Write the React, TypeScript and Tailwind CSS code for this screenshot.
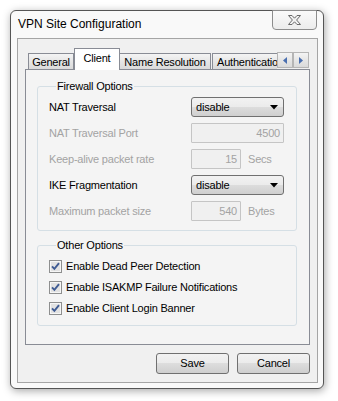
import React from "react";

const font = "font-['Liberation_Sans',Arial,sans-serif]";
const btnBg =
  "bg-[linear-gradient(#f2f2f2_0%,#ebebeb_50%,#dddddd_50%,#cfcfcf_100%)]";
const tabBg = "bg-[linear-gradient(#f4f4f4_0%,#e6e6e6_50%,#dadada_100%)]";

const Dropdown = ({ value }: { value: string }) => (
  <div
    className={`w-[93px] h-[20px] rounded-[3px] border border-[#707070] ${btnBg} flex items-center justify-between pl-[4px] pr-[5px]`}
  >
    <span className="text-black">{value}</span>
    <svg width="8" height="5" viewBox="0 0 8 5">
      <path d="M0 0H8L4 4.5Z" fill="#000" />
    </svg>
  </div>
);

const Field = ({ value, width }: { value: string; width: string }) => (
  <div
    className={`${width} h-[20px] border border-[#c5c5c5] rounded-[1px] bg-[#f0f0f0] text-right pr-[3px] leading-[18px] text-[#a3a3a3]`}
  >
    {value}
  </div>
);

const Check = () => (
  <svg width="13" height="13" viewBox="0 0 13 13">
    <rect x="0.5" y="0.5" width="12" height="12" fill="#f6f6f6" stroke="#8e8f8f" />
    <rect x="2" y="2" width="9" height="9" fill="#e2e2e2" />
    <path
      d="M3 6.3L5.4 8.9L10 3.2"
      fill="none"
      stroke="#3f5b93"
      strokeWidth="1.9"
    />
  </svg>
);

const ScrollArrow = ({ dir }: { dir: "left" | "right" }) => (
  <div
    className={`w-[16px] h-[16px] mb-px border border-[#b5b5b5] ${tabBg} flex items-center justify-center`}
  >
    <svg width="4" height="7" viewBox="0 0 4 7">
      {dir === "left" ? (
        <path d="M4 0V7L0 3.5Z" fill="#4a6fb0" />
      ) : (
        <path d="M0 0V7L4 3.5Z" fill="#4a6fb0" />
      )}
    </svg>
  </div>
);

const firewallRows = [
  { label: "NAT Traversal", enabled: true, kind: "select", value: "disable" },
  { label: "NAT Traversal Port", enabled: false, kind: "field", value: "4500" },
  { label: "Keep-alive packet rate", enabled: false, kind: "small", value: "15", unit: "Secs" },
  { label: "IKE Fragmentation", enabled: true, kind: "select", value: "disable" },
  { label: "Maximum packet size", enabled: false, kind: "small", value: "540", unit: "Bytes" },
];

const options = [
  "Enable Dead Peer Detection",
  "Enable ISAKMP Failure Notifications",
  "Enable Client Login Banner",
];

export default function App() {
  return (
    <div className={`w-[338px] h-[401px] bg-white pt-[10px] pl-[10px] text-[11px] leading-[13px] tracking-[-0.2px] ${font}`}>
      <div className="w-[314px] h-[379px] rounded-[6px] border border-[#555] bg-[#f9f9f9] shadow-[1px_2px_8px_rgba(0,0,0,0.35)] flex flex-col pl-[6px] pr-[5px] pb-[5px]">
        {/* title bar */}
        <div className="h-[27px] flex items-start justify-between">
          <div className="pl-[1px] pt-[6px] text-[12px] leading-[14px] tracking-normal text-black">
            VPN Site Configuration
          </div>
          <div className="-mt-px mr-px w-[45px] h-[20px] rounded-b-[4px] border border-[#8d8d8d] bg-[linear-gradient(#fafafa,#ececec)] flex items-center justify-center">
            <svg width="13" height="10" viewBox="0 0 13 10">
              <path
                d="M0.5 0.5H4L6.5 3.2L9 0.5H12.5L8.6 5L12.5 9.5H9L6.5 6.8L4 9.5H0.5L4.4 5Z"
                fill="#f2f2f2"
                stroke="#6a6a6a"
              />
            </svg>
          </div>
        </div>

        {/* client area */}
        <div className="h-[345px] border border-[#a5a5a5] bg-[#f0f0f0] pt-[9px] px-[7px] flex flex-col">
          {/* tabs */}
          <div className="h-[21px] flex items-end">
            <div className={`ml-[3px] w-[46px] h-[16px] border-x border-t border-[#898c95] ${tabBg} flex items-center justify-center pt-[1px]`}>
              General
            </div>
            <div className="relative z-10 -mb-px w-[46px] h-[22px] border-x border-t border-[#898c95] bg-white flex justify-center pt-[3px]">
              Client
            </div>
            <div className={`w-[91px] h-[16px] border-r border-t border-[#898c95] ${tabBg} flex items-center justify-center pt-[1px]`}>
              Name Resolution
            </div>
            <div className={`ml-px w-[65px] h-[16px] border-l border-t border-[#898c95] ${tabBg} overflow-hidden whitespace-nowrap pl-[4px] pt-[2px]`}>
              Authentication
            </div>
            <ScrollArrow dir="left" />
            <ScrollArrow dir="right" />
          </div>

          {/* tab page */}
          <div className="h-[276px] border border-[#898c95] bg-[#f4f4f4] pt-[10px] pl-[11px] pr-[12px] flex flex-col">
            <fieldset className="w-[260px] border border-[#d5dfe5] rounded-[3px] pl-[11px] pt-[4px] pb-[9px]">
              <legend className="ml-[7px] px-[1px] text-black">Firewall Options</legend>
              <div className="flex flex-col gap-[6px]">
                {firewallRows.map((r) => (
                  <div key={r.label} className="h-[20px] flex items-center">
                    <div className={`w-[142px] ${r.enabled ? "text-black" : "text-[#a3a3a3]"}`}>
                      {r.label}
                    </div>
                    {r.kind === "select" && <Dropdown value={r.value} />}
                    {r.kind === "field" && <Field value={r.value} width="w-[93px]" />}
                    {r.kind === "small" && (
                      <div className="flex items-center gap-[7px]">
                        <Field value={r.value} width="w-[50px]" />
                        <span className="text-[#a3a3a3]">{r.unit}</span>
                      </div>
                    )}
                  </div>
                ))}
              </div>
            </fieldset>

            <fieldset className="mt-[8px] w-[260px] border border-[#d5dfe5] rounded-[3px] pl-[11px] pt-[4px] pb-[6px]">
              <legend className="ml-[7px] px-[1px] text-black">Other Options</legend>
              <div className="flex flex-col">
                {options.map((o) => (
                  <div key={o} className="h-[21px] flex items-center gap-[4px] text-black">
                    <Check />
                    <span>{o}</span>
                  </div>
                ))}
              </div>
            </fieldset>
          </div>

          {/* buttons */}
          <div className="mt-[8px] flex justify-end gap-[8px]">
            <button className={`w-[73px] h-[21px] rounded-[3px] border border-[#707070] ${btnBg} text-black`}>
              Save
            </button>
            <button className={`w-[73px] h-[21px] rounded-[3px] border border-[#707070] ${btnBg} text-black`}>
              Cancel
            </button>
          </div>
        </div>
      </div>
    </div>
  );
}
